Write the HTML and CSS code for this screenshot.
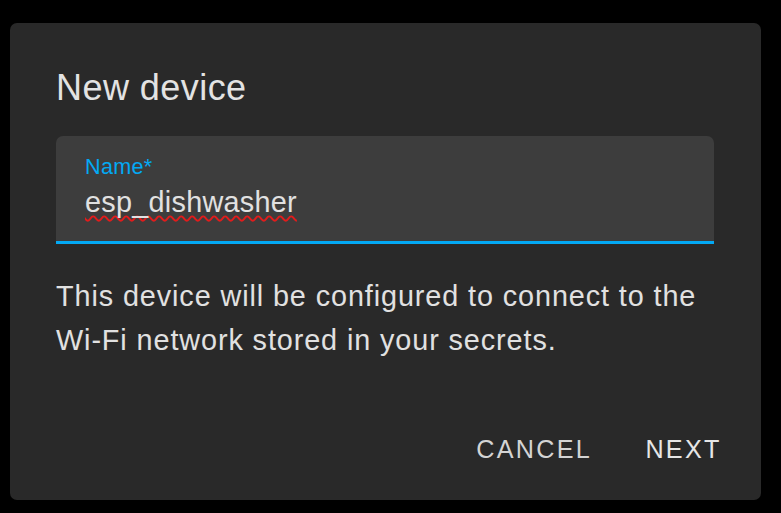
FILE: index.html
```html
<!DOCTYPE html>
<html lang="en">
<head>
<meta charset="utf-8">
<title>New device</title>
<link rel="stylesheet" href="styles.css">
</head>
<body>
<div class="dialog">
  <div class="content">
    <h2 class="title">New device</h2>
    <div class="field">
      <label class="field-label">Name*</label>
      <div class="field-value"><span class="misspelled">esp_dishwasher</span></div>
    </div>
    <p class="text">This device will be configured to connect to the Wi-Fi network stored in your secrets.</p>
  </div>
  <div class="actions">
    <button class="btn btn-cancel">Cancel</button>
    <button class="btn btn-next">Next</button>
  </div>
</div>
</body>
</html>
```
FILE: styles.css
```css
html, body {
  margin: 0;
  padding: 0;
  background: #000;
}
body {
  font-family: "Liberation Sans", Arial, sans-serif;
  width: 781px;
  height: 513px;
  overflow: hidden;
}
.dialog {
  margin: 23px 0 0 10px;
  width: 751px;
  height: 477px;
  box-sizing: border-box;
  background: #292929;
  border-radius: 7px;
  display: flex;
  flex-direction: column;
  padding-top: 45px;
}
.content {
  padding: 0 47px 0 46px;
}
.title {
  margin: 0;
  font-size: 36px;
  line-height: 40px;
  font-weight: 400;
  letter-spacing: 0.45px;
  color: #e3e3e3;
}
.field {
  margin-top: 28px;
  height: 108px;
  box-sizing: border-box;
  background: #3d3d3d;
  border-radius: 7px 7px 0 0;
  border-bottom: 3px solid #03a9f4;
  padding: 18.8px 29px 0 29px;
}
.field-label {
  display: block;
  font-size: 21.6px;
  line-height: 24px;
  color: #03a9f4;
  letter-spacing: 0.3px;
}
.field-value {
  margin-top: 6.5px;
  font-size: 28.8px;
  line-height: 34px;
  letter-spacing: 0.27px;
  color: #e1e1e1;
}
.misspelled {
  text-decoration: underline wavy #e31b1b;
  text-decoration-thickness: 1.5px;
  text-underline-offset: 3px;
  text-decoration-skip-ink: none;
}
.text {
  margin: 29.5px 0 0 0;
  font-size: 28.8px;
  line-height: 44px;
  letter-spacing: 0.9px;
  color: #e1e1e1;
}
.actions {
  margin-top: auto;
  display: flex;
  justify-content: flex-end;
  gap: 24.6px;
  padding: 0 25px 18px 0;
}
.btn {
  background: transparent;
  border: none;
  font-family: "Liberation Sans", Arial, sans-serif;
  font-size: 25.2px;
  line-height: 64.8px;
  height: 64.8px;
  padding: 0 14.4px;
  text-transform: uppercase;
  letter-spacing: 2.25px;
  font-weight: 400;
  cursor: pointer;
}
.btn-cancel {
  color: #d4d4d4;
}
.btn-next {
  color: #e6e6e6;
}
```
